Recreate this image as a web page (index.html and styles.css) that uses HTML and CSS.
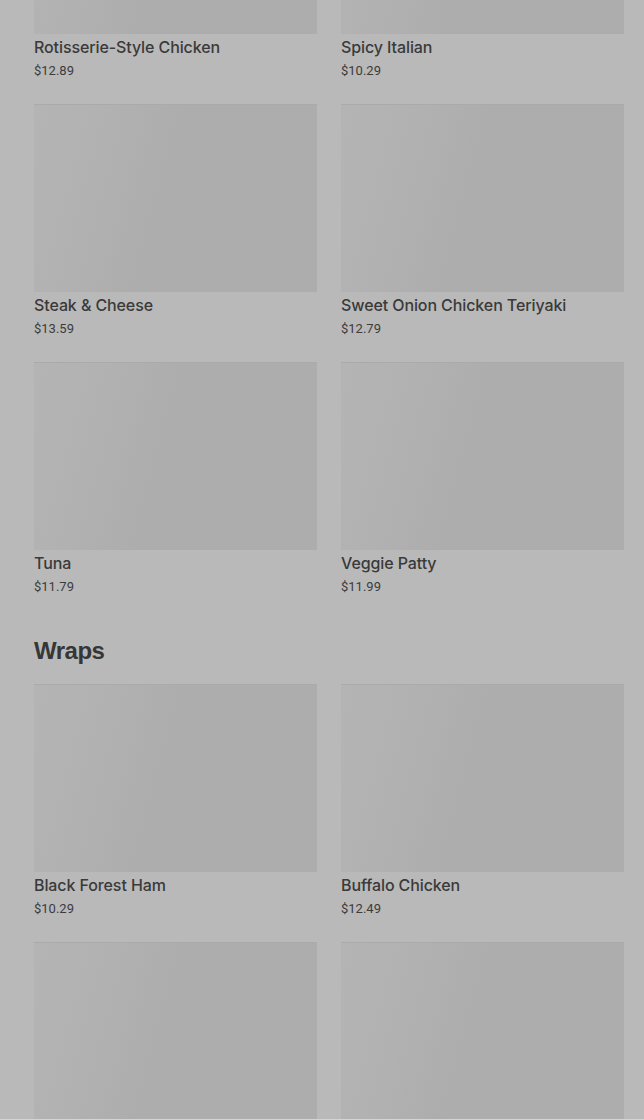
FILE: index.html
```html
<!DOCTYPE html>
<html>
<head>
    <meta charset="utf-8"/>
    <link rel="stylesheet" href="styles.css">
</head>
<body>
<div class="menu">
    <div class="section first">
        <div class="grid">
            <div class="item">
                <div class="thumb"></div>
                <div class="name">Rotisserie-Style Chicken</div>
                <div class="price">$12.89</div>
            </div>
            <div class="item">
                <div class="thumb"></div>
                <div class="name">Spicy Italian</div>
                <div class="price">$10.29</div>
            </div>
            <div class="item">
                <div class="thumb"></div>
                <div class="name">Steak &amp; Cheese</div>
                <div class="price">$13.59</div>
            </div>
            <div class="item">
                <div class="thumb"></div>
                <div class="name">Sweet Onion Chicken Teriyaki</div>
                <div class="price">$12.79</div>
            </div>
            <div class="item">
                <div class="thumb"></div>
                <div class="name">Tuna</div>
                <div class="price">$11.79</div>
            </div>
            <div class="item">
                <div class="thumb"></div>
                <div class="name">Veggie Patty</div>
                <div class="price">$11.99</div>
            </div>
        </div>
    </div>

    <div class="section">
        <h2>Wraps</h2>
        <div class="grid">
            <div class="item">
                <div class="thumb"></div>
                <div class="name">Black Forest Ham</div>
                <div class="price">$10.29</div>
            </div>
            <div class="item">
                <div class="thumb"></div>
                <div class="name">Buffalo Chicken</div>
                <div class="price">$12.49</div>
            </div>
            <div class="item">
                <div class="thumb"></div>
            </div>
            <div class="item">
                <div class="thumb"></div>
            </div>
        </div>
    </div>
</div>
</body>
</html>
```

FILE: styles.css
```css
html, body {
    margin: 0;
    background: #b9b9b9;
    overflow: hidden;
    height: 1119px;
}

.menu {
    padding: 0 20px 0 34px;
    font-family: Roboto, 'Liberation Sans', sans-serif;
    color: #383838;
}

.menu .section.first {
    margin-top: -154px;
}

.menu .section + .section {
    margin-top: 40px;
}

.menu h2 {
    margin: 0 0 18px 0;
    font-family: 'Liberation Sans', Arial, sans-serif;
    font-size: 24px;
    line-height: 30px;
    font-weight: bold;
    letter-spacing: -0.5px;
    color: #363636;
}

.menu .grid {
    display: grid;
    grid-template-columns: 1fr 1fr;
    column-gap: 24px;
    row-gap: 24px;
}

.menu .item {
    height: 234px;
}

.menu .thumb {
    height: 188px;
    background: linear-gradient(105deg, #b4b4b4 0%, #b2b2b2 20%, #adadad 45%, #adadad 100%);
    box-shadow: inset 0 1px 0 #aaaaaa;
}

.menu .name {
    margin-top: 2px;
    font-family: Inter, Roboto, sans-serif;
    font-size: 16px;
    line-height: 22px;
    font-weight: 500;
    letter-spacing: -0.1px;
    color: #3a3a3a;
}

.menu .price {
    font-size: 13px;
    line-height: 18px;
    color: #3c3c3c;
    margin-top: 4px;
}
```
